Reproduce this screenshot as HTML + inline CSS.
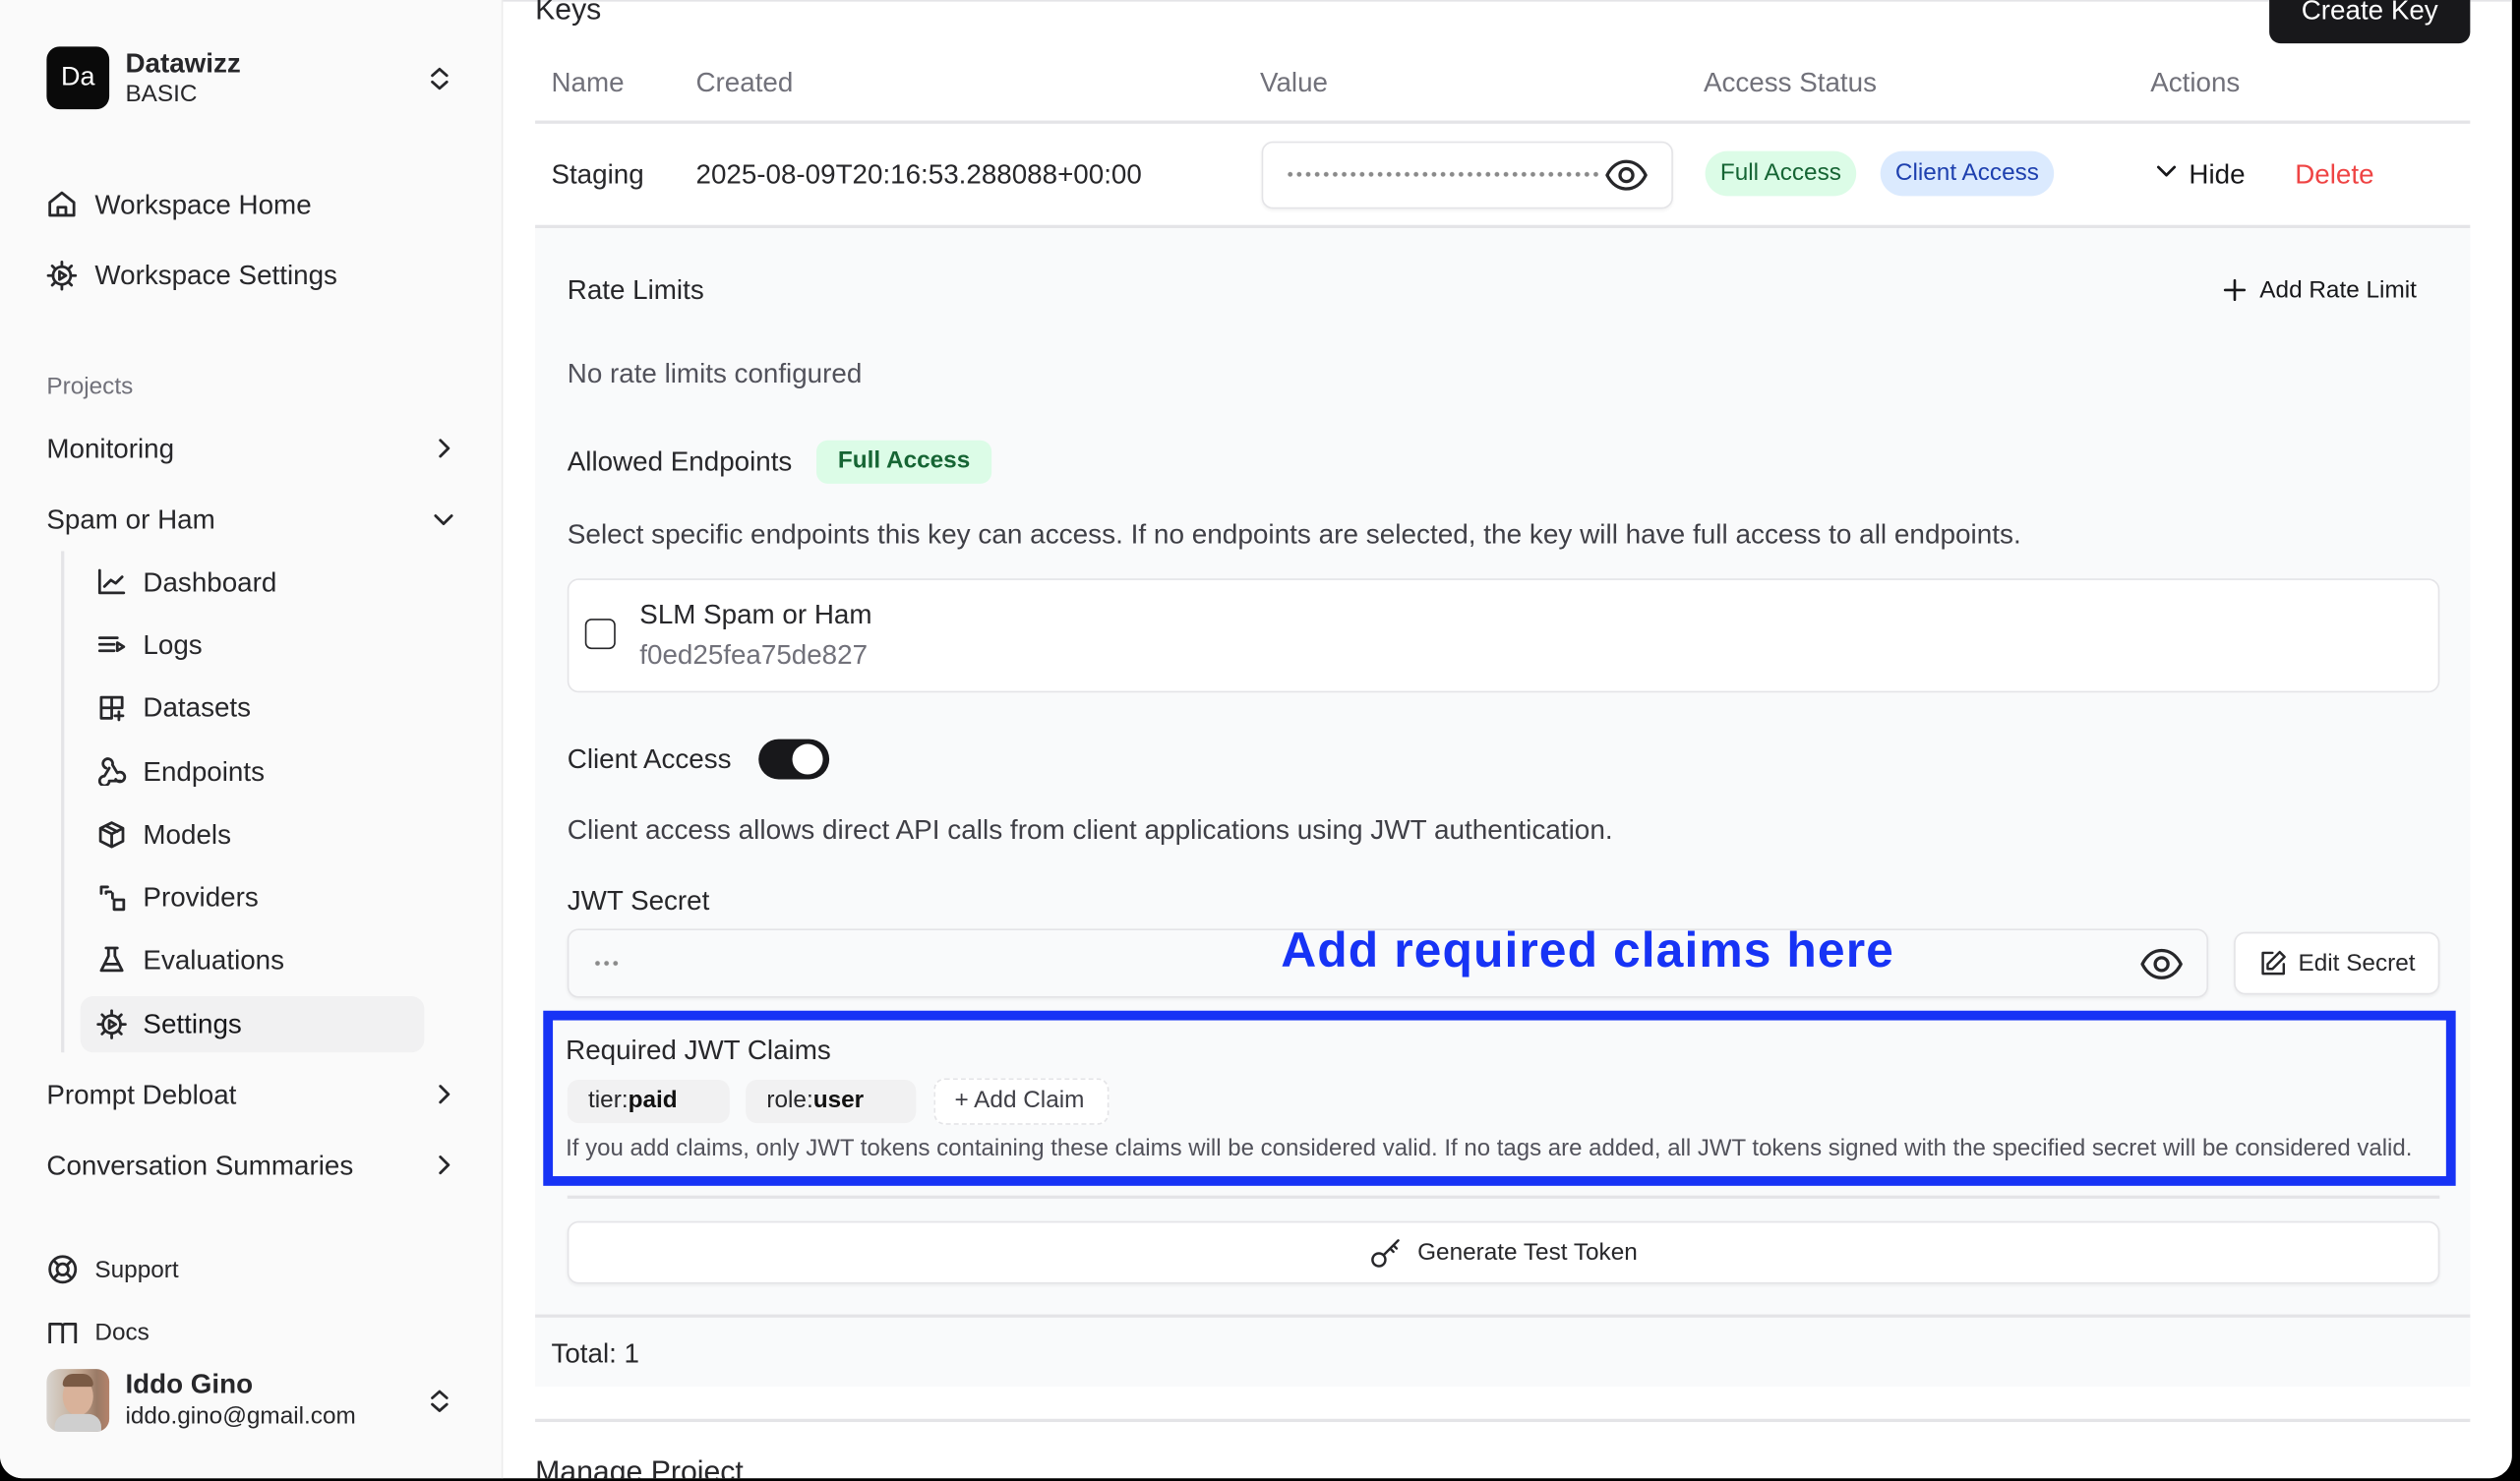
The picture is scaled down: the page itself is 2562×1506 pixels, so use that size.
<!DOCTYPE html>
<html><head><meta charset="utf-8"><style>
*{box-sizing:border-box;margin:0;padding:0}
html,body{width:2562px;height:1506px;overflow:hidden;background:#000}
#w{position:absolute;left:0;top:0;width:1568px;height:922px;transform:scale(1.633929);transform-origin:0 0;font-family:"Liberation Sans",Arial,sans-serif;color:#27272a}
#win{position:absolute;left:0;top:0;width:1563px;height:920px;background:#fff;border-radius:0 0 14px 14px;overflow:hidden}
.a{position:absolute;white-space:nowrap}
.c{transform:translateY(-50%)}
#side{position:absolute;left:0;top:0;width:313px;height:920px;background:#fafafa;border-right:1px solid #ececec}
.ni{font-size:17px;color:#27272a}
svg{position:absolute;fill:none;stroke:#27272a;stroke-width:1.7;stroke-linecap:round;stroke-linejoin:round}
.hd{font-size:17px;color:#71717a}
.line{position:absolute;height:1.5px;background:#e4e4e7}
.b{position:absolute;border:1px solid #e4e4e7;border-radius:7px;background:#fff;box-shadow:0 1px 2px rgba(0,0,0,.05)}
.dots{position:absolute;background:radial-gradient(circle,#8a8a8a 1.3px,transparent 1.6px);background-size:5.6px 5px}
</style></head><body><div id="w"><div id="win">
<div id="side">
 <div class="a" style="left:29px;top:29px;width:39px;height:39px;background:#0a0a0a;border-radius:8px;color:#fff;font-size:16.5px;line-height:39px;text-align:center">Da</div>
 <div class="a" style="left:78px;top:30px;font-size:17px;font-weight:bold">Datawizz</div>
 <div class="a" style="left:78px;top:51px;font-size:14.9px">BASIC</div>
 <svg style="left:266px;top:41px" width="15" height="16" viewBox="0 0 15 16"><path d="M3 6l4.5-4 4.5 4M3 10l4.5 4 4.5-4"/></svg>
 <svg style="left:29px;top:118px" width="19" height="18" viewBox="0 0 19 18"><path d="M2 8l7.5-6 7.5 6v8H2zM7 16v-5h5v5"/></svg>
 <div class="a ni c" style="left:59px;top:128px">Workspace Home</div>
 <svg style="left:29px;top:162px" width="19" height="19" viewBox="0 0 19 19"><circle cx="9.5" cy="9.5" r="5.5"/><path d="M9.5 1v3M9.5 15v3M1 9.5h3M15 9.5h3M3.5 3.5l2 2M13.5 13.5l2 2M3.5 15.5l2-2M13.5 5.5l2-2M8 7v5l4-2.5z"/></svg>
 <div class="a ni c" style="left:59px;top:172px">Workspace Settings</div>
 <div class="a c" style="left:29px;top:241px;font-size:14.9px;color:#71717a">Projects</div>
 <div class="a ni c" style="left:29px;top:280px">Monitoring</div>
 <svg style="left:270px;top:272px" width="12" height="14" viewBox="0 0 12 14"><path d="M4 2l5 5-5 5"/></svg>
 <div class="a ni c" style="left:29px;top:324px">Spam or Ham</div>
 <svg style="left:268px;top:317px" width="16" height="12" viewBox="0 0 16 12"><path d="M3 4l5 5 5-5"/></svg>
 <div class="a" style="left:38px;top:343px;width:1.5px;height:312px;background:#e4e4e7"></div>
 <div class="a" style="left:50px;top:620px;width:214px;height:35px;background:#f1f1f2;border-radius:8px"></div>
 <svg style="left:60px;top:353px" width="19" height="18" viewBox="0 0 19 18"><path d="M2 2v14h15M5 12l4-4 3 2 4-4"/></svg>
 <div class="a ni c" style="left:89px;top:363px">Dashboard</div>
 <svg style="left:60px;top:392px" width="19" height="18" viewBox="0 0 19 18"><path d="M2 5h11M2 9h9M2 13h9M13 8v5l4-2.5z"/></svg>
 <div class="a ni c" style="left:89px;top:402px">Logs</div>
 <svg style="left:60px;top:431px" width="19" height="19" viewBox="0 0 19 19"><path d="M9 16H3V3h13v6M3 9.5h13M9.5 3v13M14 12v5M11.5 14.5h5"/></svg>
 <div class="a ni c" style="left:89px;top:441px">Datasets</div>
 <svg style="left:60px;top:471px" width="20" height="18" viewBox="0 0 20 18"><path d="M8 7L5 12a3 3 0 1 0 3 3h7M12 14a3 3 0 1 0 1-4l-3-5a3 3 0 1 0-4 2"/></svg>
 <div class="a ni c" style="left:89px;top:481px">Endpoints</div>
 <svg style="left:60px;top:510px" width="19" height="19" viewBox="0 0 19 19"><path d="M9.5 2l7 3.5v8l-7 3.5-7-3.5v-8zM2.5 5.5l7 3.5 7-3.5M9.5 9v8M6 4l7 3.5"/></svg>
 <div class="a ni c" style="left:89px;top:520px">Models</div>
 <svg style="left:60px;top:549px" width="19" height="19" viewBox="0 0 19 19"><path d="M7 3H3v4M6 7V6h3M10 10v-3M11 11h6v6h-6z"/></svg>
 <div class="a ni c" style="left:89px;top:559px">Providers</div>
 <svg style="left:60px;top:588px" width="19" height="19" viewBox="0 0 19 19"><path d="M6 2h7M7.5 2v5L3 16h13l-4.5-9V2M5 12h9"/></svg>
 <div class="a ni c" style="left:89px;top:598px">Evaluations</div>
 <svg style="left:60px;top:628px" width="19" height="19" viewBox="0 0 19 19"><circle cx="9.5" cy="9.5" r="5.5"/><path d="M9.5 1v3M9.5 15v3M1 9.5h3M15 9.5h3M3.5 3.5l2 2M13.5 13.5l2 2M3.5 15.5l2-2M13.5 5.5l2-2M8 7v5l4-2.5z"/></svg>
 <div class="a ni c" style="left:89px;top:638px;color:#18181b">Settings</div>
 <div class="a ni c" style="left:29px;top:682px">Prompt Debloat</div>
 <svg style="left:270px;top:674px" width="12" height="14" viewBox="0 0 12 14"><path d="M4 2l5 5-5 5"/></svg>
 <div class="a ni c" style="left:29px;top:726px">Conversation Summaries</div>
 <svg style="left:270px;top:718px" width="12" height="14" viewBox="0 0 12 14"><path d="M4 2l5 5-5 5"/></svg>
 <svg style="left:29px;top:780px" width="20" height="20" viewBox="0 0 20 20"><circle cx="10" cy="10" r="8"/><circle cx="10" cy="10" r="3.5"/><path d="M4.5 4.5l3 3M12.5 12.5l3 3M15.5 4.5l-3 3M7.5 12.5l-3 3"/></svg>
 <div class="a c" style="left:59px;top:791px;font-size:14.9px">Support</div>
 <div class="a" style="left:0;top:818px;width:312px;height:18px;overflow:hidden">
  <svg style="left:29px;top:4px" width="20" height="18" viewBox="0 0 20 18"><path d="M2 14V2h6.5a1.5 1.5 0 0 1 1.5 1.5V14M10 3.5A1.5 1.5 0 0 1 11.5 2H18v12"/></svg>
  <div class="a" style="left:59px;top:4px;font-size:14.9px">Docs</div>
 </div>
 <div class="a" style="left:29px;top:852px;width:39px;height:39px;border-radius:8px;background:linear-gradient(90deg,#d8d4cf 0%,#c9b7a6 35%,#bfa28c 55%,#9a7a66 80%,#b4826a 100%);overflow:hidden">
  <div class="a" style="left:10px;top:5px;width:19px;height:24px;border-radius:50%;background:#d9b29a"></div>
  <div class="a" style="left:5px;top:28px;width:29px;height:14px;border-radius:8px 8px 0 0;background:#cfcfcf"></div>
  <div class="a" style="left:10px;top:3px;width:19px;height:8px;border-radius:8px 8px 2px 2px;background:#7a5a44"></div>
 </div>
 <div class="a" style="left:78px;top:852px;font-size:17px;font-weight:bold">Iddo Gino</div>
 <div class="a" style="left:78px;top:874px;font-size:14.9px">iddo.gino@gmail.com</div>
 <svg style="left:266px;top:864px" width="15" height="16" viewBox="0 0 15 16"><path d="M3 6l4.5-4 4.5 4M3 10l4.5 4 4.5-4"/></svg>
</div>

<div class="a" style="left:313px;top:0;width:1255px;height:1px;background:#e4e4e7"></div>
<div class="a" style="left:333px;top:-5px;font-size:18.5px">Keys</div>
<div class="a" style="left:1412px;top:-10px;width:125px;height:37px;background:#18181b;border-radius:7px;color:#fff;font-size:17px;text-align:center;line-height:34px">Create Key</div>
<div class="a hd c" style="left:343px;top:52px">Name</div>
<div class="a hd c" style="left:433px;top:52px">Created</div>
<div class="a hd c" style="left:784px;top:52px">Value</div>
<div class="a hd c" style="left:1060px;top:52px">Access Status</div>
<div class="a hd c" style="left:1338px;top:52px">Actions</div>
<div class="line" style="left:333px;top:75px;width:1204px"></div>
<div class="a c" style="left:343px;top:109px;font-size:17px">Staging</div>
<div class="a c" style="left:433px;top:109px;font-size:17px">2025-08-09T20:16:53.288088+00:00</div>
<div class="b" style="left:785px;top:88px;width:256px;height:42px"></div>
<div class="dots" style="left:800px;top:106px;width:196px;height:5px"></div>
<svg style="left:998px;top:98px;stroke-width:2" width="28" height="22" viewBox="0 0 28 22"><path d="M2 11c3-6 7.5-8.5 12-8.5S23 5 26 11c-3 6-7.5 8.5-12 8.5S5 17 2 11z"/><circle cx="14" cy="11" r="4"/></svg>
<div class="a" style="left:1061px;top:94px;width:94px;height:28px;border-radius:14px;background:#dcfce7;color:#166534;font-size:14.9px;text-align:center;line-height:29px">Full Access</div>
<div class="a" style="left:1170px;top:94px;width:108px;height:28px;border-radius:14px;background:#dbeafe;color:#1e40af;font-size:14.9px;text-align:center;line-height:29px">Client Access</div>
<svg style="left:1341px;top:101px;stroke:#18181b" width="14" height="12" viewBox="0 0 14 12"><path d="M2 3l5 5 5-5"/></svg>
<div class="a c" style="left:1362px;top:109px;font-size:17px;color:#18181b">Hide</div>
<div class="a c" style="left:1428px;top:109px;font-size:17px;color:#ef4444">Delete</div>
<div class="line" style="left:333px;top:140px;width:1204px"></div>

<div class="a" style="left:333px;top:142px;width:1204px;height:721px;background:#f9fafb"></div>
<div class="a c" style="left:353px;top:181px;font-size:17px">Rate Limits</div>
<svg style="left:1383px;top:173px;stroke:#18181b;stroke-width:1.6" width="15" height="15" viewBox="0 0 15 15"><path d="M7.5 1.5v12M1.5 7.5h12"/></svg>
<div class="a c" style="left:1406px;top:181px;font-size:14.9px;color:#18181b">Add Rate Limit</div>
<div class="a c" style="left:353px;top:233px;font-size:17px;color:#52525b">No rate limits configured</div>
<div class="a c" style="left:353px;top:288px;font-size:17px">Allowed Endpoints</div>
<div class="a" style="left:508px;top:274px;width:109px;height:27px;border-radius:7px;background:#dcfce7;color:#166534;font-size:14.9px;font-weight:bold;text-align:center;line-height:27px">Full Access</div>
<div class="a c" style="left:353px;top:333px;font-size:17.1px;color:#3f3f46">Select specific endpoints this key can access. If no endpoints are selected, the key will have full access to all endpoints.</div>
<div class="b" style="left:353px;top:360px;width:1165px;height:71px;box-shadow:none"></div>
<div class="a" style="left:364px;top:385px;width:19px;height:19px;border:1.5px solid #27272a;border-radius:4px;background:#fff"></div>
<div class="a c" style="left:398px;top:383px;font-size:17px">SLM Spam or Ham</div>
<div class="a c" style="left:398px;top:408px;font-size:17px;color:#71717a">f0ed25fea75de827</div>
<div class="a c" style="left:353px;top:473px;font-size:17px">Client Access</div>
<div class="a" style="left:472px;top:460px;width:44px;height:25px;border-radius:13px;background:#18181b"></div>
<div class="a" style="left:493px;top:463px;width:19px;height:19px;border-radius:50%;background:#fff"></div>
<div class="a c" style="left:353px;top:517px;font-size:17.1px;color:#3f3f46">Client access allows direct API calls from client applications using JWT authentication.</div>
<div class="a c" style="left:353px;top:561px;font-size:17px">JWT Secret</div>
<div class="b" style="left:353px;top:578px;width:1021px;height:43px;background:#f9fafb"></div>
<div class="dots" style="left:369px;top:597px;width:17px;height:5px"></div>
<svg style="left:1331px;top:589px;stroke-width:2" width="28" height="22" viewBox="0 0 28 22"><path d="M2 11c3-6 7.5-8.5 12-8.5S23 5 26 11c-3 6-7.5 8.5-12 8.5S5 17 2 11z"/><circle cx="14" cy="11" r="4"/></svg>
<div class="a c" style="left:797px;top:592px;font-size:30.5px;font-weight:bold;color:#1733f5;letter-spacing:0.65px">Add required claims here</div>
<div class="b" style="left:1390px;top:580px;width:128px;height:39px"></div>
<svg style="left:1406px;top:591px;stroke-width:1.5" width="17" height="17" viewBox="0 0 17 17"><path d="M8 2H2v13h13V9M12.5 1.5l3 3L8 12H5V9z"/></svg>
<div class="a c" style="left:1430px;top:600px;font-size:14.9px">Edit Secret</div>

<div class="a" style="left:338px;top:629px;width:1190px;height:109px;border:6px solid #1733f5"></div>
<div class="a c" style="left:352px;top:654px;font-size:17px">Required JWT Claims</div>
<div class="a" style="left:353px;top:672px;width:101px;height:27px;border-radius:7px;background:#f1f1f2;font-size:14.9px;line-height:27px;padding-left:13px;color:#27272a">tier:<b style="color:#111">paid</b></div>
<div class="a" style="left:464px;top:672px;width:106px;height:27px;border-radius:7px;background:#f1f1f2;font-size:14.9px;line-height:27px;padding-left:13px;color:#27272a">role:<b style="color:#111">user</b></div>
<div class="a" style="left:581px;top:671px;width:109px;height:29px;border-radius:7px;background:#fff;border:1.5px dashed #e4e4e7;font-size:14.9px;line-height:26px;padding-left:12px;color:#3f3f46">+ Add Claim</div>
<div class="a c" style="left:352px;top:715px;font-size:14.7px;color:#52525b">If you add claims, only JWT tokens containing these claims will be considered valid. If no tags are added, all JWT tokens signed with the specified secret will be considered valid.</div>
<div class="line" style="left:353px;top:744px;width:1165px"></div>
<div class="b" style="left:353px;top:760px;width:1165px;height:39px"></div>
<svg style="left:852px;top:769px;stroke-width:1.5" width="21" height="21" viewBox="0 0 21 21"><circle cx="6" cy="15" r="4"/><path d="M9 12l9-9M15 6l2 2M13 8l2 2"/></svg>
<div class="a c" style="left:882px;top:780px;font-size:14.9px">Generate Test Token</div>
<div class="line" style="left:333px;top:818px;width:1204px"></div>
<div class="a c" style="left:343px;top:843px;font-size:17px">Total: 1</div>
<div class="line" style="left:333px;top:883px;width:1204px"></div>
<div class="a" style="left:333px;top:905px;font-size:18.5px">Manage Project</div>
</div></div></body></html>
